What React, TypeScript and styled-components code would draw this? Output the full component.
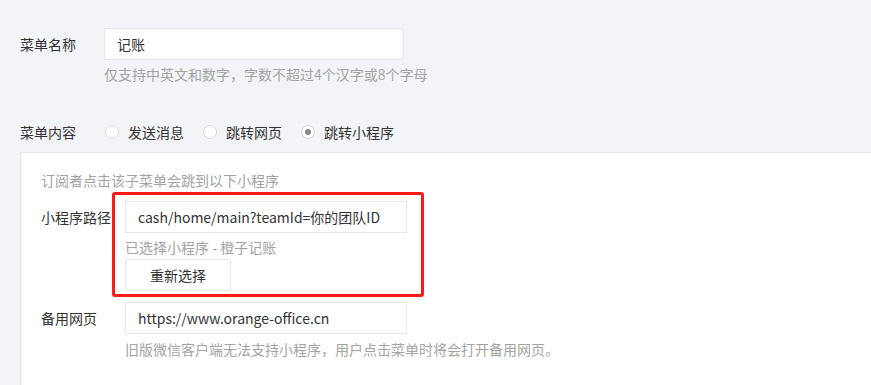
import React from "react";
import styled, { createGlobalStyle } from "styled-components";

const GlobalStyle = createGlobalStyle`
  html, body {
    margin: 0;
    padding: 0;
    background: #f3f4f8;
    overflow: hidden;
  }
  body {
    font-family: "Noto Sans CJK SC", "Open Sans", sans-serif;
    font-size: 14px;
    color: #333;
  }
`;

const Page = styled.div`
  padding: 28px 0 0 20px;
  overflow: hidden;
`;

const Row = styled.div<{ $mt?: number }>`
  display: flex;
  align-items: flex-start;
  margin-top: ${(p) => p.$mt ?? 0}px;
`;

const Label = styled.div<{ $w?: number }>`
  width: ${(p) => p.$w ?? 84}px;
  flex: none;
  line-height: 32px;
  color: #333;
  white-space: nowrap;
`;

const Field = styled.div`
  display: flex;
  flex-direction: column;
  position: relative;
`;

const TextInput = styled.div<{ $w: number }>`
  box-sizing: border-box;
  width: ${(p) => p.$w}px;
  height: 32px;
  padding: 0 12px;
  background: #fff;
  border: 1px solid #e4e6eb;
  line-height: 30px;
  color: #333;
  white-space: nowrap;
  overflow: hidden;
`;

const Hint = styled.div<{ $mt?: number }>`
  margin-top: ${(p) => p.$mt ?? 4}px;
  line-height: 20px;
  color: #a3a3a3;
  white-space: nowrap;
`;

const RadioRow = styled.div`
  display: flex;
  align-items: center;
  height: 20px;
  margin-top: 38px;
`;

const RadioLabel = styled.div`
  width: 85px;
  flex: none;
  color: #333;
`;

const RadioItem = styled.label`
  display: flex;
  align-items: center;
  gap: 9px;
  margin-right: 19px;
  color: #333;
  white-space: nowrap;
`;

const RadioCircle = styled.span<{ $checked?: boolean }>`
  box-sizing: border-box;
  width: 14px;
  height: 14px;
  border-radius: 50%;
  border: 1px solid #d6d6d6;
  background: #fff;
  display: flex;
  align-items: center;
  justify-content: center;
  &::after {
    content: "";
    display: ${(p) => (p.$checked ? "block" : "none")};
    width: 6px;
    height: 6px;
    border-radius: 50%;
    background: #8a8a8a;
  }
`;

const Panel = styled.div`
  margin-top: 10px;
  margin-right: -10px;
  background: #fff;
  border: 1px solid #e4e6eb;
  padding: 17px 0 40px 20px;
  min-height: 300px;
`;

const PanelTip = styled.div`
  line-height: 20px;
  color: #a3a3a3;
`;

const Button = styled.button`
  box-sizing: border-box;
  margin-top: 2px;
  width: 106px;
  height: 32px;
  background: #fff;
  border: 1px solid #e4e6eb;
  border-radius: 2px;
  font-family: inherit;
  font-size: 14px;
  color: #333;
  padding: 0;
`;

const Highlight = styled.div`
  position: absolute;
  top: -9px;
  left: -13px;
  right: -17px;
  bottom: -6px;
  border: 3px solid #ff1a1a;
  border-radius: 3px;
  pointer-events: none;
`;

export default function App() {
  return (
    <>
      <GlobalStyle />
      <Page>
        <Row>
          <Label>菜单名称</Label>
          <Field>
            <TextInput $w={300}>记账</TextInput>
            <Hint>仅支持中英文和数字，字数不超过4个汉字或8个字母</Hint>
          </Field>
        </Row>

        <RadioRow>
          <RadioLabel>菜单内容</RadioLabel>
          <RadioItem>
            <RadioCircle />
            发送消息
          </RadioItem>
          <RadioItem>
            <RadioCircle />
            跳转网页
          </RadioItem>
          <RadioItem>
            <RadioCircle $checked />
            跳转小程序
          </RadioItem>
        </RadioRow>

        <Panel>
          <PanelTip>订阅者点击该子菜单会跳到以下小程序</PanelTip>
          <Row $mt={11}>
            <Label>小程序路径</Label>
            <Field>
              <TextInput $w={282}>cash/home/main?teamId=你的团队ID</TextInput>
              <Hint>已选择小程序 - 橙子记账</Hint>
              <Button>重新选择</Button>
              <Highlight />
            </Field>
          </Row>
          <Row $mt={11}>
            <Label>备用网页</Label>
            <Field>
              <TextInput $w={282}>https://www.orange-office.cn</TextInput>
              <Hint $mt={5}>旧版微信客户端无法支持小程序，用户点击菜单时将会打开备用网页。</Hint>
            </Field>
          </Row>
        </Panel>
      </Page>
    </>
  );
}
